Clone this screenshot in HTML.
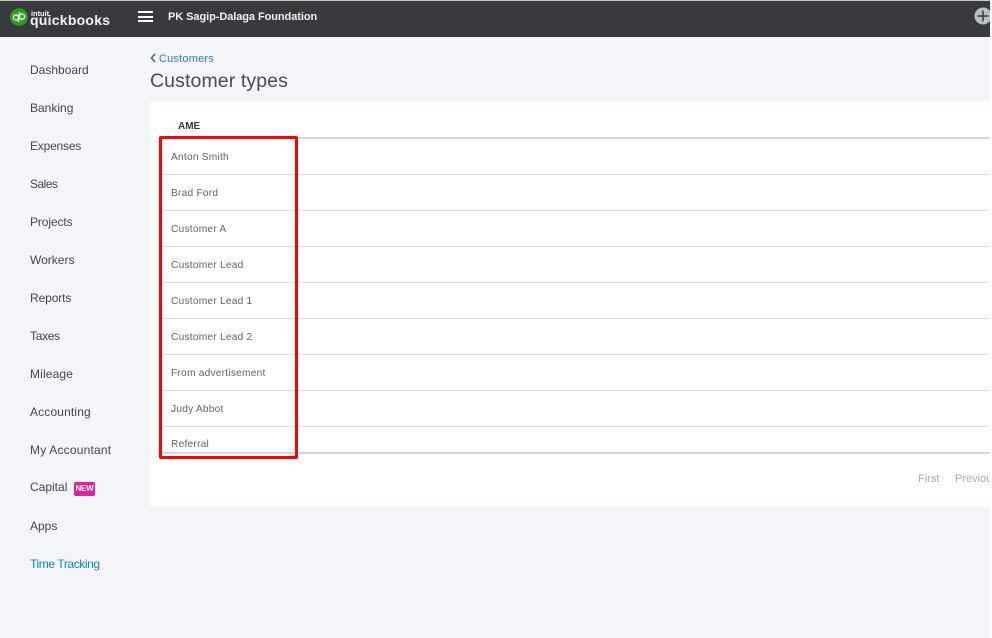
<!DOCTYPE html>
<html>
<head>
<meta charset="utf-8">
<style>
html,body{margin:0;padding:0;background:#fff;}
body{width:992px;height:638px;overflow:hidden;position:relative;font-family:"Liberation Sans",sans-serif;}
#page{position:absolute;left:0;top:0;width:990px;height:638px;background:#f3f5f9;overflow:hidden;}
.abs{position:absolute;white-space:nowrap;}
#top{position:absolute;left:0;top:0;width:990px;height:37px;background:#393a3d;border-top:1px solid #c9c9c4;box-sizing:border-box;}
.nav{position:absolute;left:30px;font-size:12px;line-height:16px;color:#444548;white-space:nowrap;}
.row{position:absolute;left:171px;font-size:10.2px;line-height:14px;color:#616265;white-space:nowrap;letter-spacing:.22px;}
.line{position:absolute;left:160px;width:830px;height:1px;background:#dcdde0;}
</style>
</head>
<body>
<div id="page">
<div id="top"></div>

<svg class="abs" style="left:10px;top:8px" width="18" height="18" viewBox="0 0 18 18">
<circle cx="9" cy="9" r="8.8" fill="#2ca01c"/>
<g fill="none" stroke="#fff" stroke-width="1.3">
<circle cx="6" cy="9.4" r="2.6"/>
<path d="M8.5 6.8V14"/>
<circle cx="12" cy="8.6" r="2.6"/>
<path d="M9.5 4V11.2"/>
</g>
</svg>
<div class="abs" style="left:31px;top:9px;font-size:7.4px;line-height:9px;font-weight:bold;color:#fff;">intuit</div>
<div class="abs" style="left:30px;top:12px;font-size:14px;line-height:17px;font-weight:bold;color:#f4f4f4;letter-spacing:.25px;">quickbooks</div>

<div class="abs" style="left:138px;top:11px;width:15px;height:2px;background:#fff;"></div>
<div class="abs" style="left:138px;top:16px;width:15px;height:2px;background:#fff;"></div>
<div class="abs" style="left:138px;top:20px;width:15px;height:2px;background:#fff;"></div>

<div class="abs" style="left:168px;top:10px;font-size:11px;line-height:14px;font-weight:bold;color:#f2f2f2;letter-spacing:-.07px;">PK Sagip-Dalaga Foundation</div>

<svg class="abs" style="left:974px;top:7px" width="16" height="18" viewBox="0 0 16 18">
<circle cx="9" cy="9" r="8.5" fill="#babec5"/>
<path d="M9 3.5V14.5M3.5 9H14.5" stroke="#36383c" stroke-width="1.5" fill="none"/>
</svg>

<div class="nav" style="top:62px">Dashboard</div>
<div class="nav" style="top:100px">Banking</div>
<div class="nav" style="top:138px;letter-spacing:-.2px">Expenses</div>
<div class="nav" style="top:176px;letter-spacing:-.5px">Sales</div>
<div class="nav" style="top:214px;letter-spacing:-.1px">Projects</div>
<div class="nav" style="top:252px">Workers</div>
<div class="nav" style="top:290px;letter-spacing:-.1px">Reports</div>
<div class="nav" style="top:328px;letter-spacing:-.3px">Taxes</div>
<div class="nav" style="top:366px;letter-spacing:.15px">Mileage</div>
<div class="nav" style="top:404px;letter-spacing:.15px">Accounting</div>
<div class="nav" style="top:442px;letter-spacing:.2px">My Accountant</div>
<div class="nav" style="top:479px">Capital</div>
<div class="abs" style="left:74px;top:482px;width:21px;height:14px;background:#e0219a;border-radius:2px;color:#fff;font-size:8px;font-weight:bold;line-height:14px;text-align:center;letter-spacing:-.2px;">NEW</div>
<div class="nav" style="top:518px">Apps</div>
<div class="nav" style="top:556px;color:#0f84c9;letter-spacing:-.4px;">Time Tracking</div>

<svg class="abs" style="left:150px;top:53px" width="6" height="10" viewBox="0 0 6 10">
<path d="M5 1L1.4 5L5 9" fill="none" stroke="#2b6cb0" stroke-width="1.6"/>
</svg>
<div class="abs" style="left:159px;top:52px;font-size:11px;line-height:14px;color:#2b7fb8;letter-spacing:.2px;">Customers</div>
<div class="abs" style="left:150px;top:69px;font-size:19.5px;line-height:24px;color:#4a4b4e;letter-spacing:.1px;">Customer types</div>

<div class="abs" style="left:150px;top:101px;width:840px;height:406px;background:#fff;"></div>

<div class="abs" style="left:178px;top:120px;font-size:10px;line-height:13px;font-weight:bold;color:#393a3d;">AME</div>
<div class="abs" style="left:160px;top:137px;width:830px;height:2px;background:#d4d7dc;"></div>

<div class="row" style="top:151px">Anton Smith</div>
<div class="line" style="top:174px"></div>
<div class="row" style="top:187px">Brad Ford</div>
<div class="line" style="top:210px"></div>
<div class="row" style="top:223px">Customer A</div>
<div class="line" style="top:246px"></div>
<div class="row" style="top:259px">Customer Lead</div>
<div class="line" style="top:282px"></div>
<div class="row" style="top:295px">Customer Lead 1</div>
<div class="line" style="top:318px"></div>
<div class="row" style="top:331px">Customer Lead 2</div>
<div class="line" style="top:354px"></div>
<div class="row" style="top:367px">From advertisement</div>
<div class="line" style="top:390px"></div>
<div class="row" style="top:403px">Judy Abbot</div>
<div class="line" style="top:426px"></div>
<div class="row" style="top:438px">Referral</div>
<div class="abs" style="left:160px;top:452px;width:830px;height:2px;background:#d4d7dc;"></div>

<div class="abs" style="left:918px;top:472px;font-size:11px;line-height:14px;color:#a8a9ab;">First</div>
<div class="abs" style="left:955px;top:472px;font-size:11px;line-height:14px;color:#a8a9ab;">Previous</div>

<div class="abs" style="left:159px;top:136px;width:139px;height:323px;border:3px solid #fe0000;border-radius:2px;box-sizing:border-box;"></div>
</div>
</body>
</html>
